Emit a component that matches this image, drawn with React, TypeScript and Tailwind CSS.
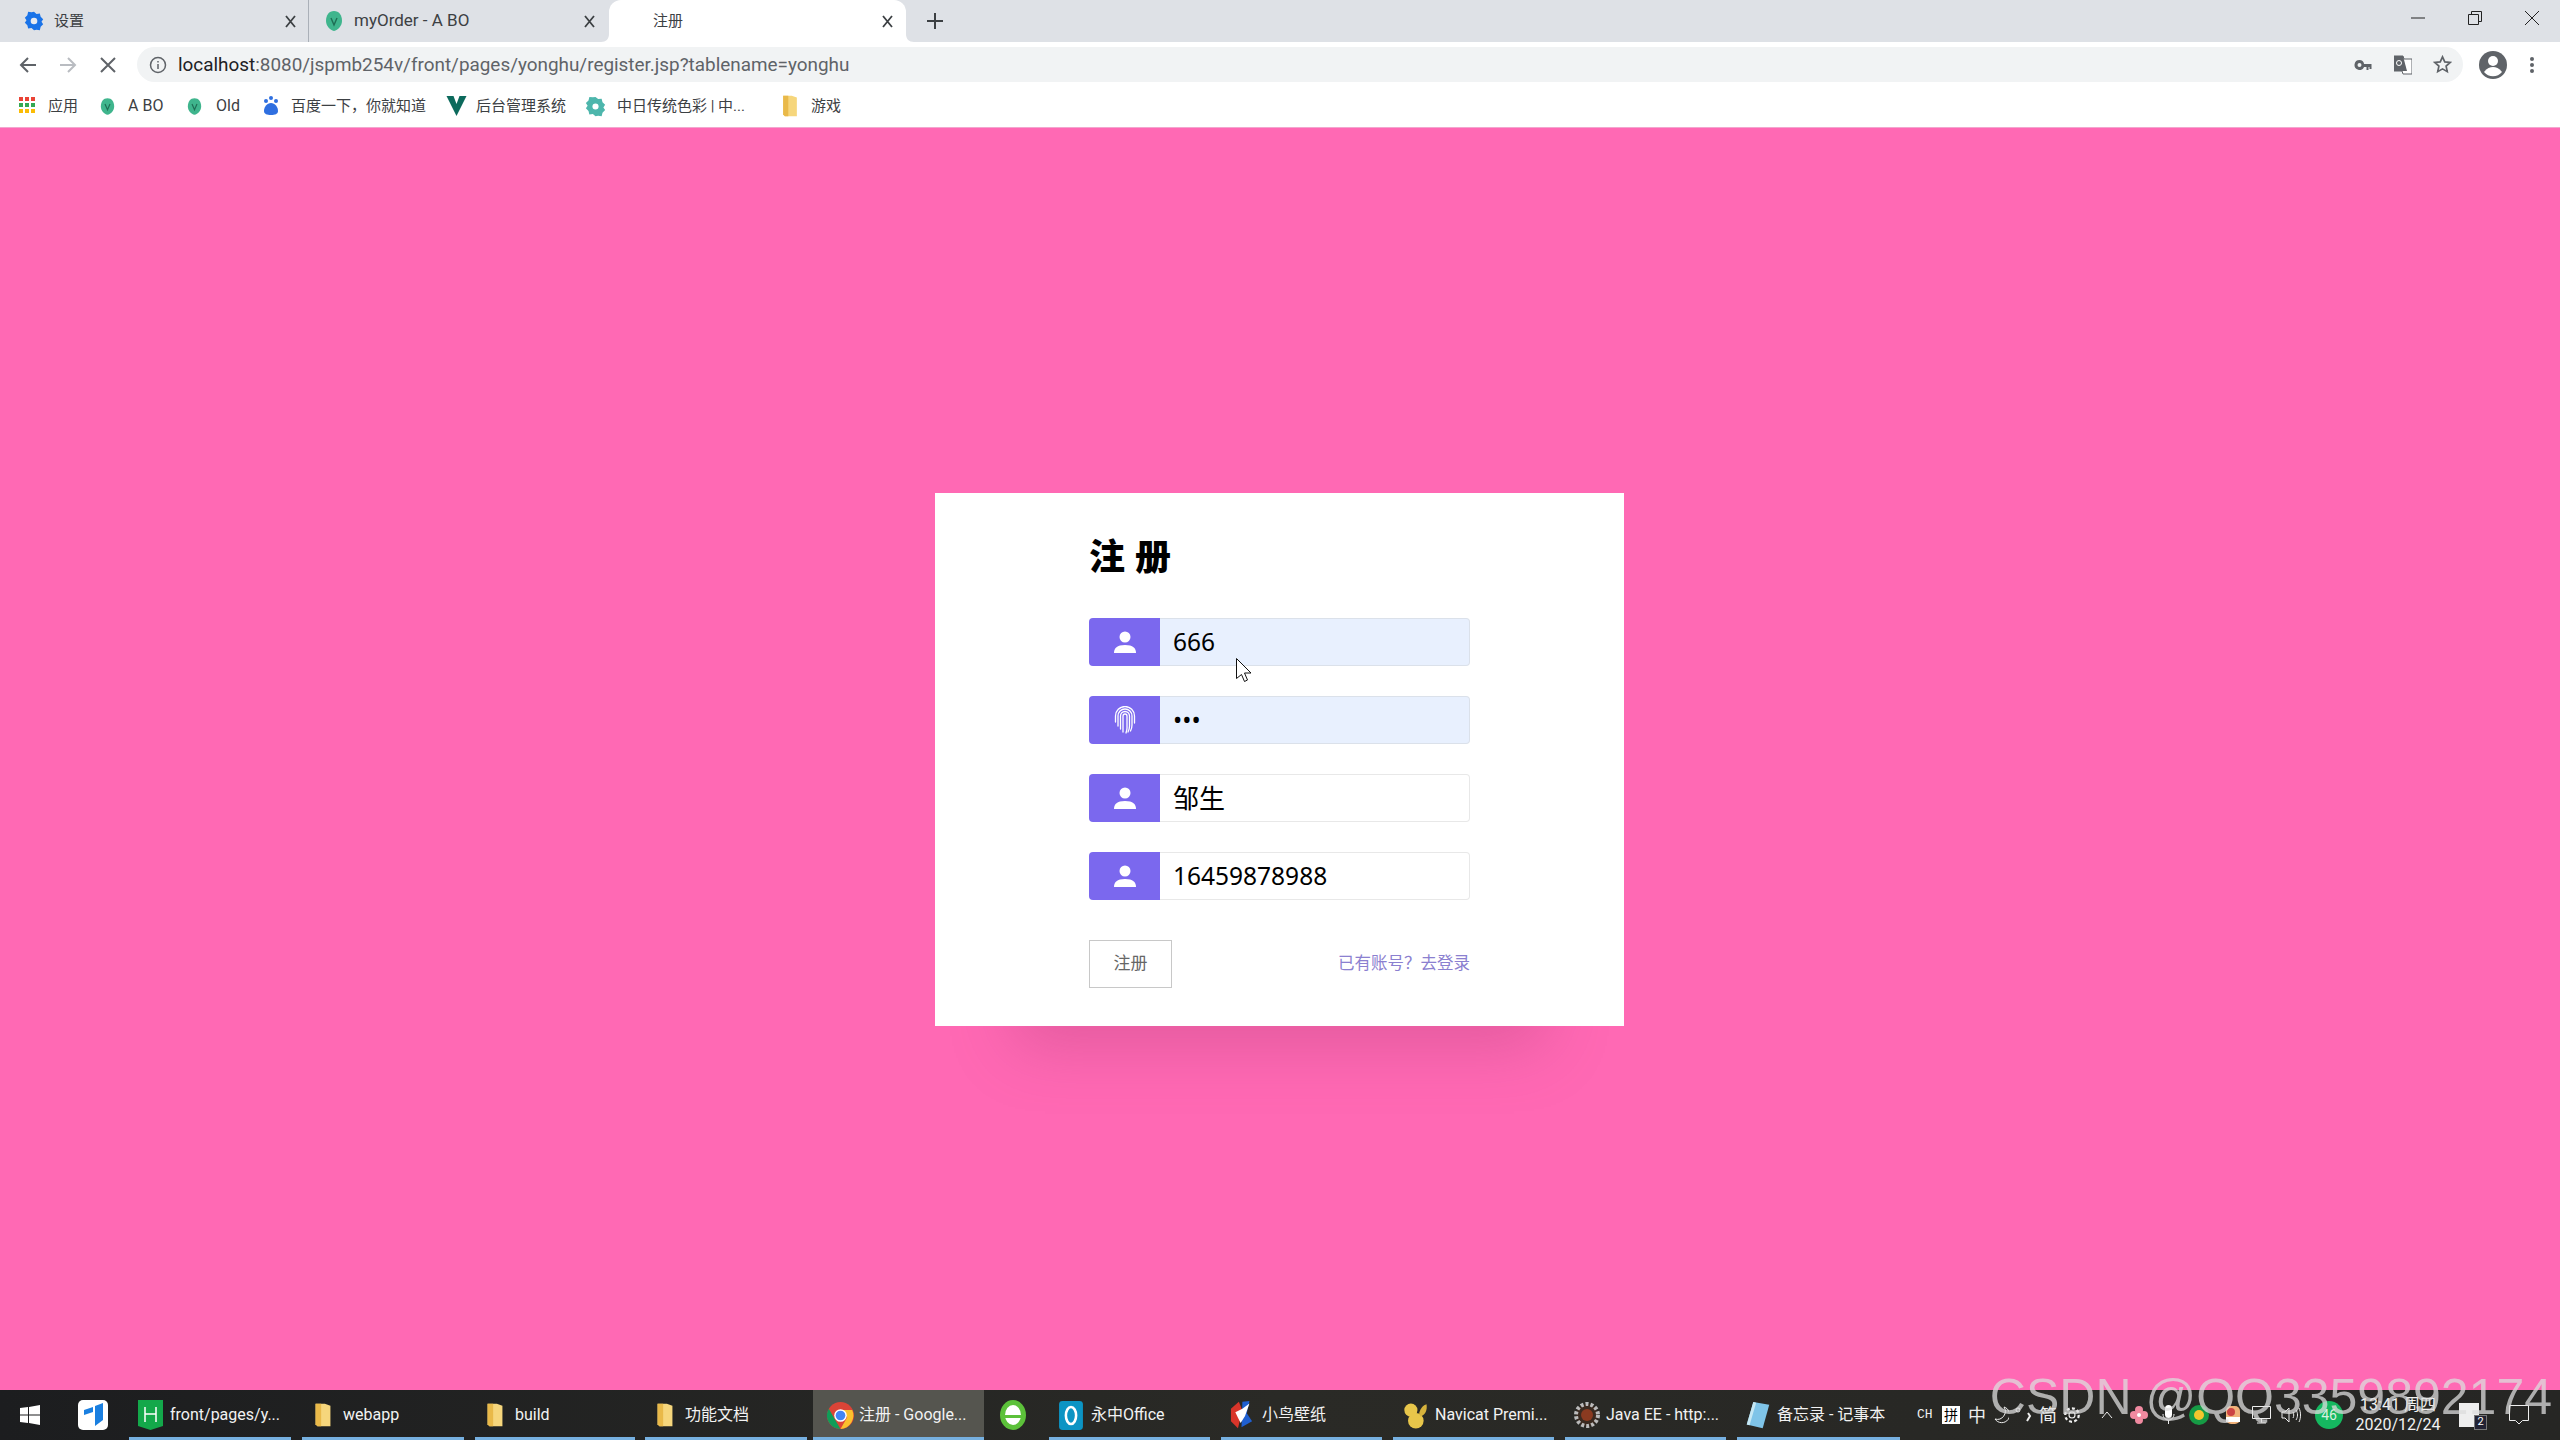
import React from "react";

const Vbadge = ({ size = 18 }: { size?: number }) => (
  <svg width={size} height={size + 4} viewBox="0 0 18 22" className="shrink-0">
    <path d="M9 1C14 1 17 5 17 11c0 5-4 9-8 10C5 20 1 16 1 11 1 5 4 1 9 1z" fill="#3fb58d" />
    <path d="M6 8l3 7 3-7" stroke="#1f6e55" strokeWidth="1.4" fill="none" />
  </svg>
);

const Gear = ({ c = "#1a73e8" }: { c?: string }) => (
  <svg width="20" height="22" viewBox="0 0 24 24" className="shrink-0">
    <path fill={c} d="M12 1l3 2.500 4-.5 1 4 3 3-2 3 2 3-3 3-1 4-4-.5L12 23l-3-2.500-4 .5-1-4-3-3 2-3-2-3 3-3 1-4 4 .5z" />
    <circle cx="12" cy="12" r="4" fill="#e8eaf0" />
  </svg>
);

const Folder = ({ h = 26 }: { h?: number }) => (
  <svg width="18" height={h} viewBox="0 0 18 28" className="shrink-0">
    <path d="M1 2h10l6 2v22H3l-2-2z" fill="#f6d67c" />
    <path d="M1 2h6v24l-4 0-2-2z" fill="#e9b949" />
  </svg>
);

const ChromeLogo = () => (
  <svg width="27" height="27" viewBox="0 0 24 24" className="shrink-0">
    <circle cx="12" cy="12" r="12" fill="#db4437" />
    <path d="M12 24A12 12 0 0 1 1.600 6l6 10.500L12 24z" fill="#0f9d58" />
    <path d="M12 24l6-10.500L12 7h10.400A12 12 0 0 1 12 24z" fill="#fbc02d" />
    <circle cx="12" cy="12" r="5.600" fill="#fff" />
    <circle cx="12" cy="12" r="4.300" fill="#4285f4" />
  </svg>
);

const User = () => (
  <svg width="22" height="22" viewBox="0 0 22 22" fill="#fff">
    <circle cx="11" cy="6" r="5.500" />
    <path d="M0 22c0-5 3-8 11-8s11 3 11 8z" />
  </svg>
);

const Fingerprint = () => (
  <svg width="22" height="28" viewBox="0 0 22 28" fill="none" stroke="#fff" strokeWidth="1.300" strokeLinecap="round">
    <path d="M1.500 16V10a9.500 9.500 0 0 1 19 0v7" />
    <path d="M4 20V10a7 7 0 0 1 14 0v9c0 2-.5 4-1.500 6" />
    <path d="M6.500 23V10a4.500 4.500 0 0 1 9 0v10c0 2-.5 4-1.500 6" />
    <path d="M9 26V10a2 2 0 0 1 4 0v12c0 1.500-.3 3-1 5" />
  </svg>
);

const Field = ({ value, type = "text", icon, filled, size = "text-[24.5px]" }: { value: string; type?: string; icon: React.ReactNode; filled?: boolean; size?: string }) => (
  <div className="flex h-[48px] w-[381px]">
    <div className="flex w-[71px] shrink-0 items-center justify-center rounded-l-[4px] bg-[#7b68ee]">{icon}</div>
    <input
      readOnly
      type={type}
      defaultValue={value}
      className={
        "min-w-0 flex-1 rounded-r-[4px] border border-l-0 px-[13px] text-black outline-none font-['Noto_Sans','Noto_Sans_CJK_SC',sans-serif] " +
        size +
        " " +
        (filled ? "border-[#dbe1ea] bg-[#e8f0fe]" : "border-[#e8e8e8] bg-white")
      }
    />
  </div>
);

const TaskItem = ({ w, icon, label, gap = "gap-[6px]", pad = "pl-[8px]", active, cls = "" }: { w: string; icon: React.ReactNode; label: string; gap?: string; pad?: string; active?: boolean; cls?: string }) => (
  <div className={`relative flex h-full shrink-0 items-center ${w} ${gap} ${pad} ${cls} ${active ? "bg-[#55554f]" : ""}`}>
    {icon}
    <span className="whitespace-nowrap text-[16px] text-[#f2f2f2]">{label}</span>
    <span className="absolute bottom-0 left-0 right-0 h-[3px] bg-[#76b0e0]" />
  </div>
);

function Close() {
  return (
    <svg width="11" height="13" viewBox="0 0 11 13" className="mt-[3px]"><path d="M1 1l9 11M10 1L1 12" stroke="#3c4043" strokeWidth="1.800" /></svg>
  );
}

export default function App() {
  return (
    <div className="relative flex h-[1440px] w-[2560px] flex-col overflow-hidden bg-[#ff69b4] font-['Roboto','Noto_Sans_CJK_SC',sans-serif]">
      {/* tab strip */}
      <div className="flex h-[42px] shrink-0 items-stretch bg-[#dee1e6] text-[15px] text-[#3c4043]">
        <div className="relative flex w-[309px] items-center gap-[10px] border-r border-[#aab0b8] pl-[24px]">
          <Gear />
          <span className="whitespace-nowrap">设置</span>
          <span className="absolute right-[12px] top-[12px] leading-[18px]"><Close /></span>
        </div>
        <div className="relative flex w-[300px] items-center gap-[11px] pl-[16px]">
          <Vbadge />
          <span className="whitespace-nowrap text-[17px]">myOrder - A BO</span>
          <span className="absolute right-[14px] top-[12px] leading-[18px]"><Close /></span>
        </div>
        <div className="relative flex w-[297px] items-center rounded-t-[12px] bg-white pl-[44px]">
          <span>注册</span>
          <span className="absolute right-[13px] top-[12px] leading-[18px]"><Close /></span>
          <svg width="8" height="8" viewBox="0 0 8 8" className="absolute -left-[8px] bottom-0"><path d="M8 0v8H0c5 0 8-3 8-8z" fill="#fff" /></svg>
          <svg width="8" height="8" viewBox="0 0 8 8" className="absolute -right-[8px] bottom-0"><path d="M0 0v8h8C3 8 0 5 0 0z" fill="#fff" /></svg>
        </div>
        <svg width="18" height="18" viewBox="0 0 18 18" className="ml-[20px] self-center">
          <path d="M9 1v16M1 9h16" stroke="#3c4043" strokeWidth="2" />
        </svg>
        <div className="ml-auto flex items-center gap-[43px] pb-[7px] pr-[21px]">
          <svg width="14" height="14" viewBox="0 0 14 14"><path d="M0 7h14" stroke="#222" strokeWidth="1" /></svg>
          <svg width="14" height="14" viewBox="0 0 14 14" fill="none" stroke="#222"><path d="M.5 3.500h10v10H.5zM3.500 3.500v-3h10v10h-3" /></svg>
          <svg width="14" height="14" viewBox="0 0 14 14"><path d="M0 0l14 14M14 0L0 14" stroke="#222" strokeWidth="1" /></svg>
        </div>
      </div>

      {/* toolbar */}
      <div className="flex h-[45px] shrink-0 items-center bg-white pl-[19px] pr-[25px]">
        <svg width="18" height="18" viewBox="0 0 18 18" fill="none" stroke="#5f6368" strokeWidth="2" className="shrink-0"><path d="M17 9H2M9 2L2 9l7 7" /></svg>
        <svg width="18" height="18" viewBox="0 0 18 18" fill="none" stroke="#b9bcc1" strokeWidth="2" className="ml-[22px] shrink-0"><path d="M1 9h15M9 2l7 7-7 7" /></svg>
        <svg width="16" height="16" viewBox="0 0 16 16" fill="none" stroke="#5f6368" strokeWidth="2" className="ml-[23px] shrink-0"><path d="M1 1l14 14M15 1L1 15" /></svg>
        <div className="ml-[21px] flex h-[35px] flex-1 items-center rounded-full bg-[#f1f3f4] pl-[12px] pr-[11px]">
          <svg width="18" height="18" viewBox="0 0 18 18" fill="none" stroke="#5f6368" strokeWidth="1.500" className="shrink-0"><circle cx="9" cy="9" r="7.500" /><path d="M9 8v5M9 5v1.500" /></svg>
          <span className="ml-[11px] whitespace-nowrap pt-[1px] text-[18.9px] text-[#5f6368]"><span className="text-[#202124]">localhost</span>:8080/jspmb254v/front/pages/yonghu/register.jsp?tablename=yonghu</span>
          <div className="ml-auto flex items-center gap-[21px]">
            <svg width="19" height="10" viewBox="0 0 18 10" fill="#5f6368"><path d="M5 0a5 5 0 1 0 4.600 7H12v3h2V7h1v2h2V4H9.600A5 5 0 0 0 5 0zm0 3a2 2 0 1 1 0 4 2 2 0 0 1 0-4z" /></svg>
            <svg width="18" height="20" viewBox="0 0 18 20"><path d="M0 1h9l1 3h8v15H9l-1-3H0z" fill="#fff" stroke="#5f6368" /><path d="M0 1h9l4 15H0z" fill="#5f6368" /><circle cx="5" cy="8" r="2.500" fill="none" stroke="#fff" /></svg>
            <svg width="19" height="19" viewBox="0 0 20 20" fill="none" stroke="#5f6368" strokeWidth="1.800"><path d="M10 2l2.400 5.300 5.600.6-4.200 3.800 1.200 5.800L10 14.600l-5 2.900 1.200-5.800L2 7.900l5.600-.6z" /></svg>
          </div>
        </div>
        <svg width="28" height="28" viewBox="0 0 28 28" className="ml-[16px] shrink-0"><circle cx="14" cy="14" r="14" fill="#5f6368" /><circle cx="14" cy="10" r="5" fill="#fff" /><path d="M5 21c3-4 6-5 9-5s6 1 9 5a11.500 11.500 0 0 1-18 0z" fill="#fff" /></svg>
        <svg width="6" height="18" viewBox="0 0 6 18" fill="#5f6368" className="ml-[22px] shrink-0"><circle cx="3" cy="3" r="2" /><circle cx="3" cy="9" r="2" /><circle cx="3" cy="15" r="2" /></svg>
      </div>

      {/* bookmarks */}
      <div className="flex h-[41px] shrink-0 items-center border-b border-[#f3a6cf] bg-white pb-[2px] pl-[19px] text-[15px] text-[#3c4043]">
        <svg width="16" height="18" viewBox="0 0 16 18" className="shrink-0">
          {[0, 6, 12].map((y) =>
            [0, 6, 12].map((x) => (
              <rect key={`${x}-${y}`} x={x} y={y} width="4" height="4" fill={y === 0 ? "#ea4335" : y === 6 ? "#34a853" : "#fbbc05"} />
            ))
          )}
        </svg>
        <span className="ml-[13px] w-[52px] shrink-0">应用</span>
        <Vbadge size={15} />
        <span className="ml-[13px] w-[59px] shrink-0 text-[16px]">A BO</span>
        <Vbadge size={15} />
        <span className="ml-[14px] w-[45px] shrink-0 text-[16px]">Old</span>
        <svg width="20" height="22" viewBox="0 0 18 22" fill="#2f6fe0" className="shrink-0"><circle cx="4" cy="6" r="2" /><circle cx="9" cy="3" r="2" /><circle cx="14" cy="6" r="2" /><path d="M9 8c4 0 7 4 7 8 0 3-3 4-7 4s-7-1-7-4c0-4 3-8 7-8z" /></svg>
        <span className="ml-[10px] w-[155px] shrink-0 whitespace-nowrap">百度一下，你就知道</span>
        <svg width="21" height="22" viewBox="0 0 20 22" className="shrink-0"><path d="M0 1h7l3 8 3-8h7L10 21z" fill="#0c6a5c" /></svg>
        <span className="ml-[9px] w-[109px] shrink-0 whitespace-nowrap">后台管理系统</span>
        <svg width="21" height="21" viewBox="0 0 24 24" className="shrink-0"><path fill="#4db6ac" d="M12 1l3 2.500 4-.5 1 4 3 3-2 3 2 3-3 3-1 4-4-.5L12 23l-3-2.500-4 .5-1-4-3-3 2-3-2-3 3-3 1-4 4 .5z" /><circle cx="12" cy="12" r="3.500" fill="#fff" /></svg>
        <span className="ml-[11px] w-[164px] shrink-0 whitespace-nowrap">中日传统色彩 | 中...</span>
        <Folder h={24} />
        <span className="ml-[12px]">游戏</span>
      </div>

      {/* page */}
      <main className="flex flex-1 items-center justify-center pr-[1px] pt-[1px]">
        <div className="flex h-[533px] w-[689px] flex-col items-center bg-white pt-[39px] shadow-[0_100px_60px_-80px_rgba(150,50,100,0.27)]">
          <div className="w-[381px]">
            <h1 className="text-[36px] font-black leading-[44px] tracking-[10px] text-black font-['Noto_Sans_CJK_SC',sans-serif]">注册</h1>
          </div>
          <div className="mt-[42px] flex flex-col gap-[30px]">
            <Field value="666" icon={<User />} filled />
            <Field value="666" type="password" icon={<Fingerprint />} filled />
            <Field value="邹生" icon={<User />} size="text-[26px]" />
            <Field value="16459878988" icon={<User />} />
          </div>
          <div className="mt-[40px] flex w-[381px] items-center justify-between">
            <button className="h-[48px] w-[83px] border border-[#c8c8c8] bg-white text-[17px] text-[#666]">注册</button>
            <div className="text-[16.5px] text-[#8b80d0]">已有账号？去登录</div>
          </div>
        </div>
      </main>

      {/* taskbar */}
      <div className="flex h-[50px] shrink-0 items-stretch bg-gradient-to-r from-[#1c1d1f] via-[#2a2a26] to-[#262624]">
        <div className="flex w-[78px] shrink-0 items-center pl-[20px]">
          <svg width="20" height="20" viewBox="0 0 20 20" fill="#fff"><path d="M0 3l8-1v7.500H0zM9 2l11-2v9.500H9zM0 10.500h8V18l-8-1zM9 10.500h11V20L9 18z" /></svg>
        </div>
        <div className="flex w-[51px] shrink-0 items-center">
          <svg width="30" height="30" viewBox="0 0 30 30"><rect width="30" height="30" rx="5" fill="#fff" /><path d="M6 10l9-3v5l-9 3zM17 6l8-3v17l-8 6z" fill="#1a7fe0" /></svg>
        </div>
        <TaskItem w="w-[162px]" label="front/pages/y..." pad="pl-[9px]" gap="gap-[7px]" icon={<svg width="25" height="30" viewBox="0 0 25 30" className="shrink-0"><path d="M0 0h25v26l-12.500 4L0 26z" fill="#13a84a" /><path d="M7 7v15M18 7v15M7 14h11" stroke="#fff" strokeWidth="1.500" /></svg>} />
        <TaskItem w="w-[162px]" cls="ml-[11px]" label="webapp" pad="pl-[12px]" gap="gap-[11px]" icon={<Folder />} />
        <TaskItem w="w-[160px]" cls="ml-[11px]" label="build" pad="pl-[11px]" gap="gap-[11px]" icon={<Folder />} />
        <TaskItem w="w-[162px]" cls="ml-[10px]" label="功能文档" pad="pl-[11px]" gap="gap-[11px]" icon={<Folder />} />
        <TaskItem w="w-[171px]" cls="ml-[6px]" label="注册 - Google..." active pad="pl-[14px]" gap="gap-[5px]" icon={<ChromeLogo />} />
        <div className="ml-[16px] flex w-[49px] shrink-0 items-center">
          <svg width="26" height="30" viewBox="0 0 26 30"><ellipse cx="13" cy="15" rx="13" ry="15" fill="#5cc13a" /><ellipse cx="13" cy="15" rx="8" ry="10" fill="#fff" /><path d="M5 15h16v3H5z" fill="#5cc13a" /></svg>
        </div>
        <TaskItem w="w-[161px]" label="永中Office" pad="pl-[8px]" gap="gap-[6px]" icon={<svg width="28" height="29" viewBox="0 0 28 34" className="shrink-0"><rect width="28" height="34" rx="4" fill="#0c94c4" /><ellipse cx="14" cy="17" rx="6" ry="10" fill="none" stroke="#fff" strokeWidth="3" /></svg>} />
        <TaskItem w="w-[161px]" cls="ml-[11px]" label="小鸟壁纸" pad="pl-[7px]" gap="gap-[7px]" icon={<svg width="27" height="30" viewBox="0 0 26 34" className="shrink-0"><path d="M1 10L10 2l4 10-5 20-8-8z" fill="#d8352a" /><path d="M14 2l8-1-3 14 6 9-12 7z" fill="#1f5fd0" /><path d="M6 14l8-4 8-6-5 14-5 8-3-6z" fill="#fff" /></svg>} />
        <TaskItem w="w-[161px]" cls="ml-[11px]" label="Navicat Premi..." pad="pl-[7px]" gap="gap-[5px]" icon={<svg width="30" height="28" viewBox="0 0 30 34" className="shrink-0"><circle cx="10" cy="11" r="8" fill="#e8c64a" /><circle cx="16" cy="24" r="9.500" fill="#e8c64a" /><path d="M20 15C22 8 25 5 29 4c1 7-1 12-7 15z" fill="#d6b23c" /></svg>} />
        <TaskItem w="w-[161px]" cls="ml-[11px]" label="Java EE - http:..." pad="pl-[8px]" gap="gap-[5px]" icon={<svg width="28" height="28" viewBox="0 0 28 28" className="shrink-0"><circle cx="14" cy="14" r="11" fill="#3a2a20" stroke="#bbb" strokeWidth="4" strokeDasharray="3 2" /><circle cx="14" cy="14" r="6" fill="#8a3a20" /></svg>} />
        <TaskItem w="w-[163px]" cls="ml-[11px]" label="备忘录 - 记事本" pad="pl-[8px]" gap="gap-[6px]" icon={<svg width="26" height="30" viewBox="0 0 26 32" className="shrink-0"><path d="M8 2l17 3-7 25-17-4z" fill="#7fc4e8" /><path d="M1 26l7-24 3 1-7 24z" fill="#c7e8f4" /></svg>} />

        {/* tray */}
        <div className="ml-auto flex items-center pr-[31px] text-[#eee]">
          <span className="w-[16px] shrink-0 font-['Liberation_Mono',monospace] text-[13px]">CH</span>
          <span className="ml-[9px] flex h-[18px] w-[18px] shrink-0 items-center justify-center bg-white text-[14px] leading-none text-black">拼</span>
          <span className="ml-[8px] w-[18px] shrink-0 text-[18px]">中</span>
          <svg width="15" height="18" viewBox="0 0 15 18" fill="none" stroke="#eee" className="ml-[8px] shrink-0"><path d="M10 1a8 8 0 1 1-9 12 8 8 0 0 0 9-12z" /></svg>
          <svg width="18" height="18" viewBox="0 0 18 18" fill="none" stroke="#eee" className="ml-[6px] shrink-0"><circle cx="3" cy="4" r="2" /><path d="M13 7l2 3-3 5" strokeWidth="2" /></svg>
          <span className="ml-[6px] w-[18px] shrink-0 text-[18px]">简</span>
          <svg width="18" height="18" viewBox="0 0 24 24" fill="none" stroke="#eee" strokeWidth="1.500" className="ml-[6px] shrink-0"><circle cx="12" cy="12" r="4" /><circle cx="12" cy="12" r="9" strokeDasharray="4 3" strokeWidth="3" /></svg>
          <svg width="12" height="8" viewBox="0 0 12 8" fill="none" stroke="#eee" className="ml-[20px] shrink-0"><path d="M1 7l5-6 5 6" /></svg>
          <svg width="18" height="18" viewBox="0 0 18 18" className="ml-[17px] shrink-0"><circle cx="9" cy="4" r="4" fill="#f08aa0" /><circle cx="4" cy="9" r="4" fill="#f08aa0" /><circle cx="14" cy="9" r="4" fill="#f08aa0" /><circle cx="9" cy="14" r="4" fill="#f08aa0" /><circle cx="9" cy="9" r="2" fill="#fff" /></svg>
          <svg width="13" height="20" viewBox="0 0 13 20" className="ml-[14px] shrink-0"><rect x="3" width="7" height="13" rx="3.500" fill="#fff" /><path d="M1 9c0 8 11 8 11 0M6.500 15v4" fill="none" stroke="#eee" /></svg>
          <svg width="20" height="20" viewBox="0 0 20 20" className="ml-[14px] shrink-0"><circle cx="10" cy="10" r="10" fill="#169b45" /><circle cx="10" cy="10" r="5" fill="#f2c62d" /></svg>
          <svg width="14" height="18" viewBox="0 0 14 18" className="ml-[17px] shrink-0"><rect width="14" height="18" rx="5" fill="#f0b27a" /><circle cx="5" cy="6" r="4" fill="#c44" /><rect y="11" width="14" height="5" fill="#fff" /></svg>
          <svg width="19" height="18" viewBox="0 0 19 18" fill="none" stroke="#eee" className="ml-[12px] shrink-0"><path d="M.5.500h18v12H.5zM9.500 12.500v4M5 17h9" /></svg>
          <svg width="20" height="16" viewBox="0 0 20 16" fill="none" stroke="#eee" className="ml-[10px] shrink-0"><path d="M1 5h3l4-4v14l-4-4H1zM12 5c1 2 1 4 0 6M15 3c2 3 2 7 0 10M18 1c2 4 2 10 0 14" /></svg>
          <span className="ml-[14px] flex h-[28px] w-[28px] shrink-0 items-center justify-center rounded-full bg-[#15b860] text-[14px] text-[#d8f0e0]">46</span>
          <div className="ml-[13px] flex w-[84px] shrink-0 flex-col items-center text-[16px] leading-[20px] text-[#f2f2f2]">
            <span className="whitespace-nowrap">13:41 周四</span>
            <span className="whitespace-nowrap">2020/12/24</span>
          </div>
          <div className="relative ml-[19px] h-[24px] w-[20px] shrink-0 border-l-2 border-[#eee] bg-[#eee]">
            <span className="absolute -bottom-[3px] -right-[8px] flex h-[15px] w-[13px] items-center justify-center border border-[#777] bg-[#223] text-[11px] text-white">2</span>
          </div>
          <svg width="20" height="20" viewBox="0 0 20 20" fill="none" stroke="#eee" className="ml-[30px] shrink-0"><path d="M.5.500h19v15h-6l-3.500 3.500-3.500-3.500h-6z" /></svg>
        </div>
      </div>

      {/* pointer over the field */}
      <svg width="16" height="25" viewBox="0 0 16 25" className="absolute left-[1236px] top-[658px]">
        <path d="M.5.500v20l5-4 3 7 3-1.500-3-7h6.500z" fill="#fff" stroke="#111" />
      </svg>

      {/* watermark */}
      <div className="pointer-events-none absolute right-[8px] top-[1367px] whitespace-nowrap text-[50px] leading-[60px] text-[#dcdcdc]/75 font-['Liberation_Sans',sans-serif]">CSDN @QQ3359892174</div>
    </div>
  );
}
